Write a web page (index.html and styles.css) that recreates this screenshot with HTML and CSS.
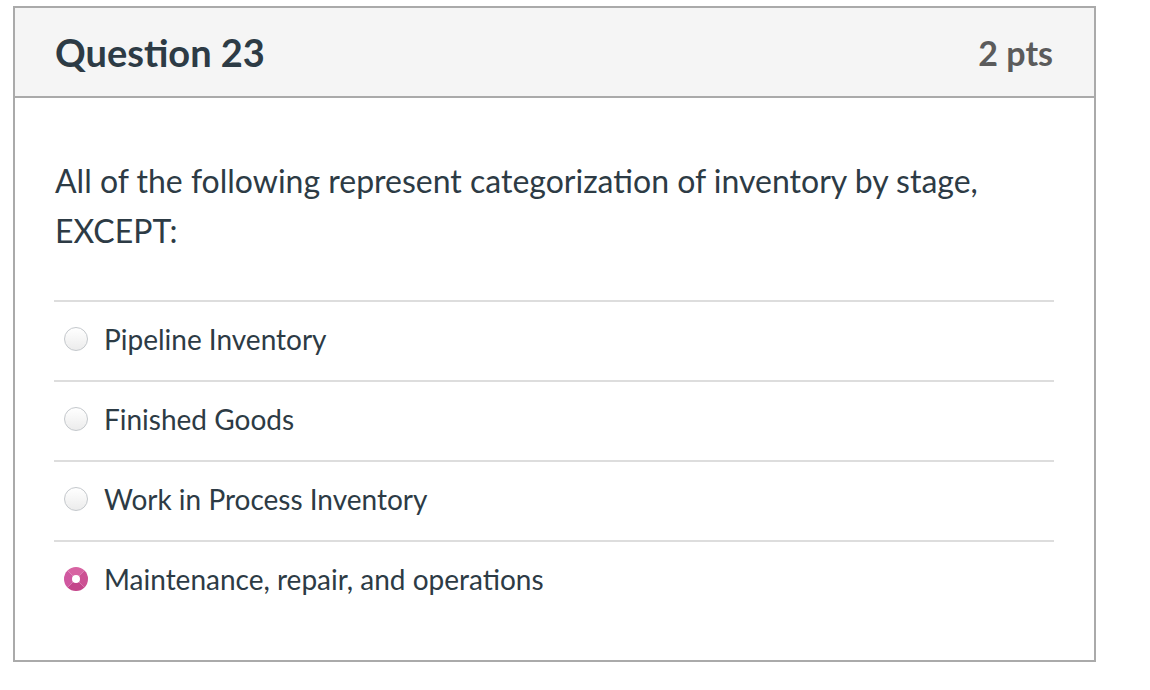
FILE: index.html
```html
<!DOCTYPE html>
<html>
<head>
<meta charset="utf-8">
<link rel="stylesheet" href="styles.css">
</head>
<body>
<div class="card">
  <div class="header">
    <span class="title">Question 23</span>
    <span class="pts">2 pts</span>
  </div>
  <div class="body">
    <div class="question">All of the following represent categorization of inventory by stage, EXCEPT:</div>
    <div class="options">
      <div class="option"><span class="radio"></span><span class="label">Pipeline Inventory</span></div>
      <div class="option"><span class="radio"></span><span class="label">Finished Goods</span></div>
      <div class="option"><span class="radio"></span><span class="label">Work in Process Inventory</span></div>
      <div class="option"><span class="radio checked"></span><span class="label">Maintenance, repair, and operations</span></div>
    </div>
  </div>
</div>
</body>
</html>
```
FILE: styles.css
```css
html, body {
  margin: 0;
  padding: 0;
  background: #fff;
}
body {
  font-family: Lato, "Open Sans", "Liberation Sans", sans-serif;
  color: #2d3b45;
}
.card {
  margin: 6px 0 0 13px;
  width: 1083px;
  height: 656px;
  box-sizing: border-box;
  border: 2px solid #aaaaaa;
  background: #fff;
}
.header {
  height: 90px;
  box-sizing: border-box;
  background: #f5f5f5;
  border-bottom: 2px solid #aaaaaa;
  display: flex;
  align-items: center;
  justify-content: space-between;
  padding: 0 41px 0 40px;
}
.title {
  font-weight: 700;
  font-size: 38px;
  color: #2d3b45;
}
.pts {
  font-weight: 700;
  font-size: 34px;
  color: #5b5b5b;
}
.body {
  padding: 58px 40px 40px 39px;
}
.question {
  font-size: 32px;
  line-height: 50px;
  padding-left: 1px;
  width: 960px;
  margin-bottom: 44px;
}
.options {
  width: 1000px;
}
.option {
  height: 80px;
  box-sizing: border-box;
  border-top: 2px solid #dddddd;
  display: flex;
  align-items: center;
  padding: 0 0 5px 10px;
}
.radio {
  width: 24px;
  height: 24px;
  box-sizing: border-box;
  border-radius: 50%;
  border: 1px solid #c4c8cc;
  background: linear-gradient(#ffffff, #ececec);
  margin-right: 16px;
  flex: none;
}
.radio.checked {
  border: 8px solid #cc4f93;
  background: #fff;
  border-color: #d763a2 #cc5193 #c4448a #d058a0;
}
.label {
  font-size: 28px;
  color: #2d3b45;
}
```
